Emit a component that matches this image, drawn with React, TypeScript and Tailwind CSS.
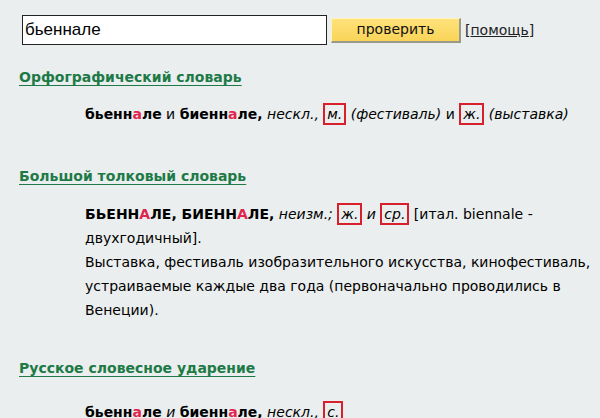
import React from "react";

const A = () => <span className="text-[#e0264e]">а</span>;
const AU = () => <span className="text-[#e0264e]">А</span>;
const Box = ({ children }: { children: React.ReactNode }) => (
  <span className="inline-block border-2 border-[#d8202c] px-[2px] leading-[18px]">{children}</span>
);

export default function App() {
  return (
    <div className="w-[600px] h-[418px] overflow-hidden bg-[#eaeeee] text-black" style={{ fontFamily: '"DejaVu Sans", Verdana, sans-serif' }}>
      <div className="flex items-center pt-[15px] pl-[22px]">
        <div className="w-[305px] h-[30px] border border-[#222] bg-white flex items-center pl-[2px] text-[17px] font-['Liberation_Sans',Arial,sans-serif]">
          бьеннале
        </div>
        <button className="ml-[4px] w-[130px] h-[25px] bg-gradient-to-b from-[#fee27a] to-[#f9d457] border-t border-l border-t-[#fff3c0] border-l-[#fff3c0] border-r-2 border-b-2 border-r-[#9a9a8a] border-b-[#9a9a8a] text-[14px] text-[#111] flex items-center justify-center">
          проверить
        </button>
        <span className="ml-[4px] text-[14px] text-[#222]">
          [<span className="underline">помощь</span>]
        </span>
      </div>

      <div className="pl-[19px]">
        <div className="mt-[22px] leading-[20px] text-[14px] font-bold text-[#1d7a47] underline underline-offset-[3px]">
          Орфографический словарь
        </div>
        <div className="mt-[15px] pl-[66px] pr-[10px] text-[14px] leading-[24px]">
          <b>бьенн<A />ле</b> и <b>биенн<A />ле,</b>{" "}
          <i>
            нескл., <Box>м.</Box> (фестиваль)
          </i>{" "}
          и{" "}
          <i>
            <Box>ж.</Box> (выставка)
          </i>
        </div>

        <div className="mt-[40px] leading-[20px] text-[14px] font-bold text-[#1d7a47] underline underline-offset-[3px]">
          Большой толковый словарь
        </div>
        <div className="mt-[16px] pl-[66px] pr-[4px] text-[14px] leading-[24px]">
          <b>
            БЬЕНН<AU />ЛЕ, БИЕНН<AU />ЛЕ,
          </b>{" "}
          <i>
            неизм.; <Box>ж.</Box> и <Box>ср.</Box>
          </i>{" "}
          [итал. biennale - двухгодичный].
          <br />
          Выставка, фестиваль изобразительного искусства, кинофестиваль, устраиваемые каждые два года (первоначально проводились в Венеции).
        </div>

        <div className="mt-[36px] leading-[20px] text-[14px] font-bold text-[#1d7a47] underline underline-offset-[3px]">
          Русское словесное ударение
        </div>
        <div className="mt-[22px] pl-[66px] text-[14px] leading-[24px]">
          <b>бьенн<A />ле</b> <i>и</i> <b>биенн<A />ле,</b>{" "}
          <i>
            нескл., <Box>с.</Box>
          </i>
        </div>
      </div>
    </div>
  );
}
